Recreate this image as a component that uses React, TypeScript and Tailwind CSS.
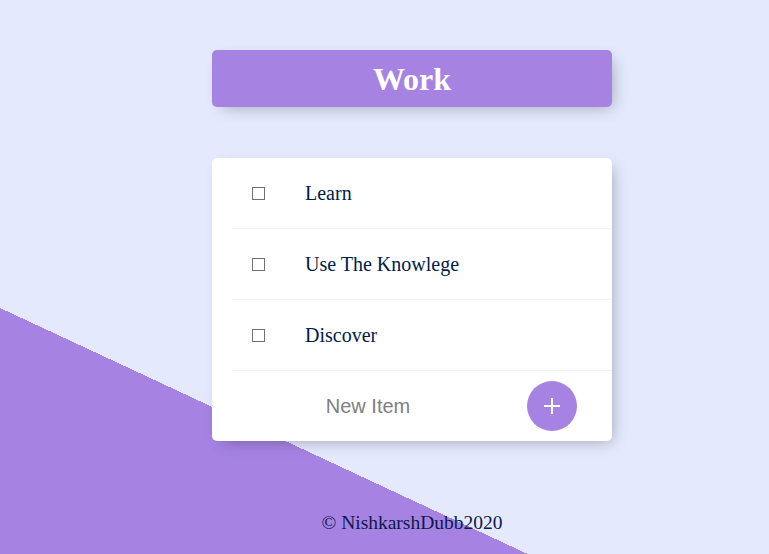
import React from 'react'

const items = ['Learn', 'Use The Knowlege', 'Discover']

const serif = "[font-family:'Liberation_Serif','Times_New_Roman',serif]"

export default function App() {
  return (
    <div className="h-[554px] overflow-hidden pt-[50px] bg-[linear-gradient(25deg,#A683E3_223px,#E4E9FD_223px)] [font-family:'Liberation_Serif','Times_New_Roman',serif]">
      <div className="ml-[212px] w-[400px]">
        {/* heading */}
        <div className="flex h-[57px] items-center justify-center rounded-[5px] bg-[#A683E3] shadow-[5px_5px_15px_-5px_rgba(0,0,0,0.3)]">
          <h1 className={`${serif} text-[32px] font-bold leading-none text-white`}>Work</h1>
        </div>

        {/* list */}
        <div className="mt-[51px] rounded-[5px] bg-white shadow-[5px_5px_15px_-5px_rgba(0,0,0,0.3)]">
          {items.map((item) => (
            <div key={item} className="ml-[20px] flex h-[71px] items-center border-b border-[#F1F1F1] pb-px">
              <input
                type="checkbox"
                className="ml-[20px] mt-[2px] h-[13px] w-[13px] appearance-none border border-[#707070] bg-white"
              />
              <p className={`${serif} pl-[40px] text-[20px] leading-none text-[#00204a]`}>{item}</p>
            </div>
          ))}
          <div className="ml-[20px] flex h-[70px] items-center">
            <input
              type="text"
              placeholder="New Item"
              className="h-[60px] w-[272px] bg-transparent text-center [font-family:'Liberation_Sans',Arial,sans-serif] text-[20px] outline-none placeholder:text-[#808080]"
            />
            <button className="ml-[23px] flex h-[50px] w-[50px] items-center justify-center rounded-full bg-[#A683E3]">
              <svg width="16" height="16" viewBox="0 0 16 16">
                <path d="M8 0v16M0 8h16" stroke="#fff" strokeWidth="2" />
              </svg>
            </button>
          </div>
        </div>

        <footer className={`${serif} mt-[70px] text-center text-[19.5px] leading-[24px] text-[#0a1a4a]`}>
          © NishkarshDubb2020
        </footer>
      </div>
    </div>
  )
}
